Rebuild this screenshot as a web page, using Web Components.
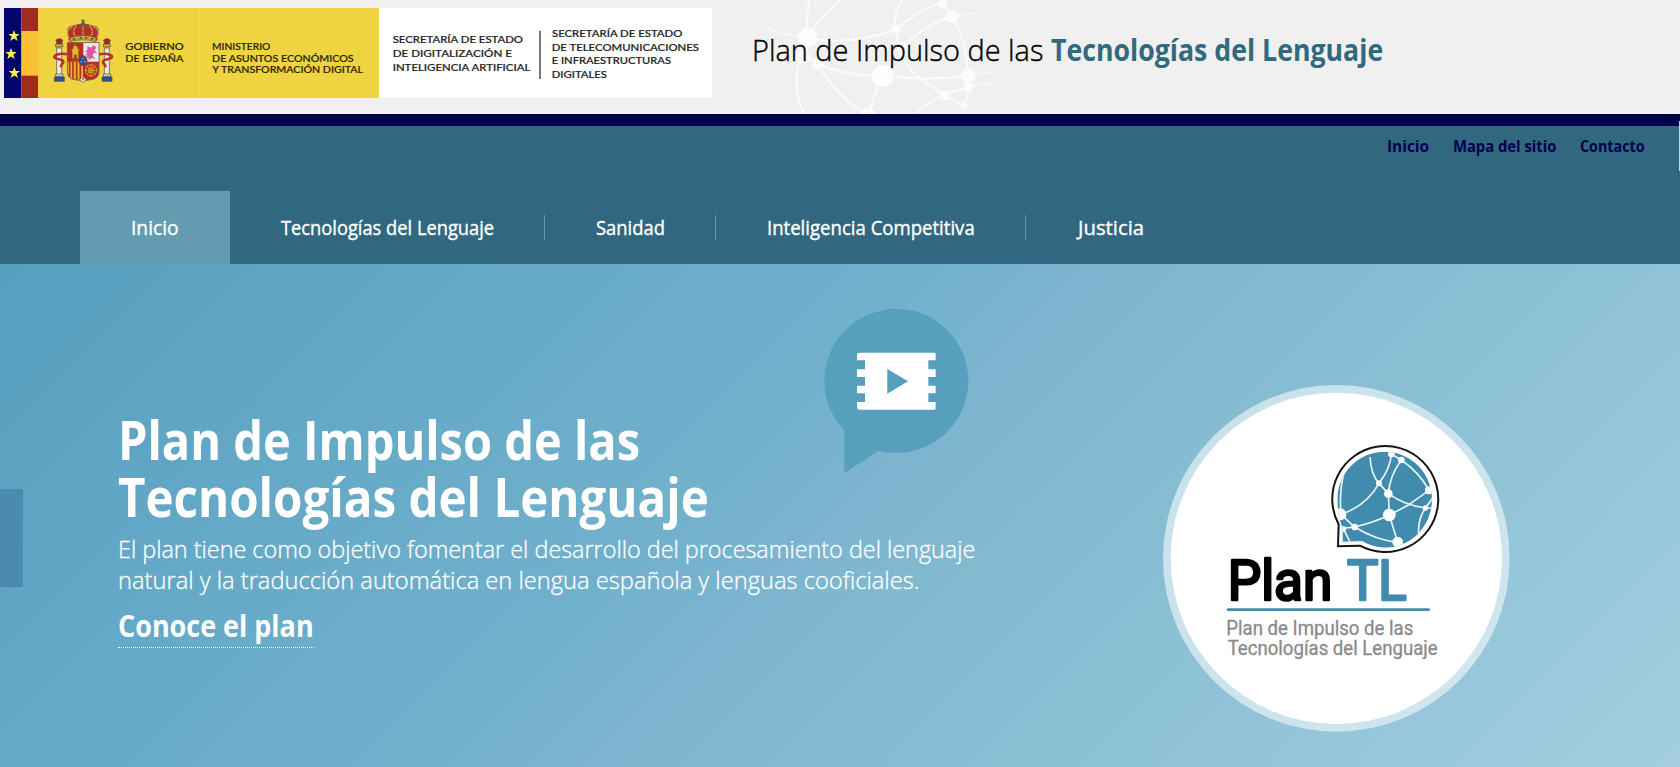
<!DOCTYPE html>
<html lang="es">
<head>
<meta charset="utf-8">
<title>Plan de Impulso de las Tecnologías del Lenguaje</title>
<style>
html,body{margin:0;height:100%;overflow:hidden}
body{font-family:"Open Sans","Noto Sans",sans-serif;background:#f0f0f0}
</style>
</head>
<body>
<plan-page></plan-page>
<script>
// Renders its text on one line at exactly the width given in the "w" attribute.
class FitText extends HTMLElement{
  connectedCallback(){
    if(this.shadowRoot)return;
    const r=this.attachShadow({mode:'open'});
    r.innerHTML='<style>:host{display:block;white-space:nowrap}span{display:inline-block;transform-origin:0 50%}</style><span><slot></slot></span>';
    const s=r.querySelector('span'),w=+this.getAttribute('w');
    this.style.width=w+'px';
    s.style.transform='scaleX('+w/s.offsetWidth+')';
  }
}

const define=(name,html)=>customElements.define(name,class extends HTMLElement{
  connectedCallback(){
    if(this.shadowRoot)return;
    this.attachShadow({mode:'open'}).innerHTML=html;
  }
});

define('gov-logo',`<style>:host{display:block;width:708px;height:90px}svg{display:block}text{font-family:Lato,sans-serif;font-weight:500;font-size:31px;stroke-width:.6}</style>
<svg width="708" height="90" viewBox="12 24 2124 270">
<rect x="12" y="24" width="2124" height="270" fill="#fff"/>
<rect x="115" y="24" width="1022" height="270" fill="#f0d340"/>
<rect x="12" y="24" width="52" height="270" fill="#00046b"/>
<rect x="64" y="24" width="51" height="270" fill="#a02b1f"/>
<rect x="64" y="93" width="51" height="134" fill="#fcc133"/>
<rect x="114" y="24" width="3" height="270" fill="#f3c83c"/>
<rect x="594" y="24" width="5" height="270" fill="#f4da4c"/>
<g fill="#fbee4a">
<path id="st" d="M42 90l4.500 12h12.500l-10 8 4 13-11-7.500-11 7.500 4-13-10-8h12.500z"/>
<use href="#st" x="-9" y="54"/><use href="#st" x="1" y="111"/></g>
<g stroke-linejoin="round">
<g stroke="#4d4938" stroke-width="2">
<path fill="#ececdf" d="M170 144h15v83h-15zM313 144h15v83h-15z"/>
<path fill="#a02b2b" d="M168 120q10-9 20 0l-3 12h-14zM311 120q10-9 20 0l-3 12h-14z"/>
<path fill="#d9a63a" d="M167 132h21v9h-21zM310 132h21v9h-21z"/>
<path fill="#ccd5dc" d="M167 222h22v8h-22zM310 222h22v8h-22z"/>
<path fill="#28549b" d="M163 231h30v13h-30zM306 231h30v13h-30z"/>
</g>
<path d="M204 163q-20-4-34 1-13 6-3 11l20 6q7 5-2 12l-3 9M295 163q20-4 34 1 13 6 3 11l-20 6q-7 5 2 12l3 9" fill="none" stroke="#bd3030" stroke-width="8"/>
<path d="M202 128h95v86q0 22-24 25-15 0-24 7-9-7-24-7-23-3-23-25z" fill="#bd2b24" stroke="#736647" stroke-width="3"/>
<path d="M250 129h46v56h-46z" fill="#eee9ec"/>
<path d="M203 185h46v59q-9-6-22-6-24-3-24-24z" fill="#e4b72e"/>
<path d="M209 185v45M219 185v52M230 185v53M241 185v55" stroke="#b92e20" stroke-width="5"/>
<path d="M216 176v-22l-2-8h5v-8h5v-5h4v5h5v8h5l-2 8v22h-7v-11h-6v11z" fill="#e1b631" stroke="#725819" stroke-width="2"/>
<path d="M262 139l11 4 7-8 10 8-7 7 8 10-10-2-3 9 9 10-12-3-9 7-1-9-9 5 6-12-7 2 7-10-8-3 8-4z" fill="#dc59a2"/>
<circle cx="273" cy="211" r="17" fill="none" stroke="#d39a28" stroke-width="3"/>
<path d="M273 193v37M255 211h37M260 198l26 26M286 198l-26 26" stroke="#d39a28" stroke-width="3"/>
<circle cx="273" cy="211" r="8" fill="none" stroke="#d39a28" stroke-width="3"/>
<path d="M240 239l9-9 9 9-9 7z" fill="#e8eee9"/><path d="M249 232v9" stroke="#398856" stroke-width="4"/>
<ellipse cx="249" cy="182" rx="12" ry="15" fill="#24509b" stroke="#a1372d" stroke-width="3"/>
<circle cx="249" cy="176" r="2" fill="#edca43"/><circle cx="244" cy="185" r="2" fill="#edca43"/><circle cx="254" cy="185" r="2" fill="#edca43"/>
<path d="M207 121l-4-24q-3-18 18-19 12-6 28-5 16-1 28 5 21 1 18 19l-4 24q-42-13-84 0z" fill="#b62e2a" stroke="#7d6331" stroke-width="3"/>
<path d="M207 115q-13-25 12-35M291 115q13-25-12-35M227 111q-13-18 3-34M271 111q13-18-3-34M249 72v39" fill="none" stroke="#d9bd66" stroke-width="4" stroke-dasharray="4 2"/>
<path d="M209 113q40-13 80 0l-2 12q-38-11-76 0z" fill="#cfa035" stroke="#715325" stroke-width="2"/>
<path d="M218 117h8M239 114h7M255 114h7M272 117h8" stroke="#285b94" stroke-width="4"/>
<circle cx="249" cy="71" r="5" fill="#456ca3" stroke="#584819" stroke-width="2"/>
<path d="M249 67v-8M244 62h10" stroke="#584819" stroke-width="3"/>
</g>
<g fill="#29240b" stroke="#29240b">
<text x="376" y="150" textLength="175" lengthAdjust="spacingAndGlyphs">GOBIERNO</text>
<text x="376" y="185" textLength="174" lengthAdjust="spacingAndGlyphs">DE ESPAÑA</text>
<text x="636" y="150" textLength="175" lengthAdjust="spacingAndGlyphs">MINISTERIO</text>
<text x="636" y="185" textLength="425" lengthAdjust="spacingAndGlyphs">DE ASUNTOS ECONÓMICOS</text>
<text x="637" y="220" textLength="452" lengthAdjust="spacingAndGlyphs">Y TRANSFORMACIÓN DIGITAL</text></g>
<g fill="#222" stroke="#222">
<text x="1178" y="130" textLength="391" lengthAdjust="spacingAndGlyphs">SECRETARÍA DE ESTADO</text>
<text x="1178" y="171" textLength="358" lengthAdjust="spacingAndGlyphs">DE DIGITALIZACIÓN E</text>
<text x="1178" y="212" textLength="413" lengthAdjust="spacingAndGlyphs">INTELIGENCIA ARTIFICIAL</text>
<text x="1656" y="111" textLength="391" lengthAdjust="spacingAndGlyphs">SECRETARÍA DE ESTADO</text>
<text x="1655" y="152" textLength="442" lengthAdjust="spacingAndGlyphs">DE TELECOMUNICACIONES</text>
<text x="1655" y="193" textLength="358" lengthAdjust="spacingAndGlyphs">E INFRAESTRUCTURAS</text>
<text x="1655" y="234" textLength="166" lengthAdjust="spacingAndGlyphs">DIGITALES</text></g>
<path d="M1620 92v145" stroke="#333" stroke-width="4"/>
</svg>`);

define('net-backdrop',`<style>:host{display:block}svg{display:block}</style>
<svg width="260" height="114" viewBox="750 0 260 114">
<g fill="none" stroke="#fbfbfb" stroke-width="2">
<path d="M807 38Q806 18 809 0M807 38Q820 17 841 0M807 38Q855 46 896 29M896 29Q892 14 902 0M896 29Q925 6 942 3M942 3L952 16M896 29Q899 64 921 79T944 95M952 16Q915 30 904 48M952 16Q968 45 968 75M818 64Q850 77 883 76Q925 81 968 76M818 64Q838 100 868 114M883 76Q873 92 870 114M801 56Q791 85 804 114M807 38V57L818 64M968 76V87Q968 99 964 106M944 95L964 106M944 95L968 87M944 95Q928 102 917 113"/>
<path stroke-width="1.200" d="M765 27Q782 35 807 38M952 16L978 13M968 76L997 71M968 87L995 82"/></g>
<g fill="#fcfcfc"><circle cx="807.500" cy="38" r="10"/><circle cx="803" cy="57" r="7"/><circle cx="818" cy="64" r="6"/><circle cx="883" cy="76" r="11"/><circle cx="968" cy="75.500" r="7"/><circle cx="968" cy="87" r="5"/><circle cx="944.500" cy="95.500" r="5"/><circle cx="964" cy="106" r="4" opacity=".7"/><circle cx="896" cy="29" r="4.500"/><circle cx="952" cy="16.500" r="6"/><circle cx="942.500" cy="3" r="5"/><circle cx="904" cy="49" r="7"/><circle cx="868" cy="116" r="8"/></g>
</svg>`);

define('site-header',`<style>
:host{display:flex;position:relative;height:114px;background:#f0f0f0;border-bottom:12px solid #00004c}
gov-logo{margin:8px 0 0 4px}
net-backdrop{position:absolute;left:750px;top:0}
h1{position:relative;display:flex;margin:0 0 0 40px;font-size:30px;line-height:99px;height:99px;font-weight:300;color:#000;gap:8px;-webkit-text-stroke:.4px}
b{font-weight:700;color:#31697f;-webkit-text-stroke:0}
</style><gov-logo></gov-logo><net-backdrop></net-backdrop>
<h1><fit-text w="291">Plan de Impulso de las</fit-text><b><fit-text w="332">Tecnologías del Lenguaje</fit-text></b></h1>`);

define('top-links',`<style>
:host{display:flex;justify-content:flex-end;gap:24px;height:65px;padding-right:35px;font-size:16.500px;line-height:40px;font-weight:700;color:#00004f}
</style><fit-text w="42">Inicio</fit-text><fit-text w="103">Mapa del sitio</fit-text><fit-text w="65">Contacto</fit-text>`);

define('nav-item',`<style>
:host{display:flex;align-items:center;justify-content:space-between;box-sizing:border-box;height:73px;padding-left:51px}
:host([active]){background:#639bb0}
:host([last]){padding-left:52px}
i{width:1px;height:25px;background:#5d97ad}
:host([active]) i,:host([last]) i{visibility:hidden}
</style><slot></slot><i></i>`);

define('main-nav',`<style>
:host{display:grid;grid-template-columns:150px 315px 171px 310px 170px;padding-left:80px;font-size:20px;line-height:71px;font-weight:400;color:#fff;-webkit-text-stroke:.35px}
</style>
<nav-item active><fit-text w="48">Inicio</fit-text></nav-item>
<nav-item><fit-text w="213">Tecnologías del Lenguaje</fit-text></nav-item>
<nav-item><fit-text w="69">Sanidad</fit-text></nav-item>
<nav-item><fit-text w="208">Inteligencia Competitiva</fit-text></nav-item>
<nav-item last><fit-text w="66">Justicia</fit-text></nav-item>`);

define('nav-band',`<style>
:host{display:block;position:relative;height:138px;background:#31687f}
i{position:absolute;right:0;top:-5px;width:1px;height:50px;background:#c6d5db}
</style><top-links></top-links><main-nav></main-nav><i></i>`);

define('video-bubble',`<style>:host{display:block}svg{display:block}</style>
<svg width="146" height="166" viewBox="72 52 438 498">
<path d="M136 420A216 216 0 1 1 239 480L136 547z" fill="#56a0be"/>
<path d="M181 186H406Q410 186 410 190V209H388V236H410V259H388V285H410V308H388V334H410V353Q410 357 406 357H181Q174 357 174 350V334H198V308H174V285H198V259H174V236H198V209H174V193Q174 186 181 186z" fill="#fff"/>
<path d="M265 235L327 272 265 309z" fill="#56a0be"/></svg>`);

define('plan-badge',`<style>:host{display:block}svg{display:block;overflow:visible}text{font-family:Roboto,sans-serif;stroke-linejoin:round}</style>
<svg width="346.670" height="346.670" viewBox="40 42 1040 1040">
<circle cx="560" cy="562" r="520" fill="#fff" fill-opacity=".55"/>
<circle cx="560" cy="562" r="497" fill="#fff"/>
<path d="M567 460A159 159 0 1 1 631 524L565 526z" fill="#fff" stroke="#151515" stroke-width="6"/>
<clipPath id="g"><path d="M579 470Q563 436 563 385A142 144 0 1 1 705 530Q668 528 637 510L579 512z"/></clipPath>
<g clip-path="url(#g)"><rect x="550" y="230" width="310" height="310" fill="#408bae"/>
<g fill="none" stroke="#e9f4f8" stroke-width="5">
<path d="M574 430Q567 350 588 290M574 430Q650 405 688 337Q722 292 725 250M661 258Q664 310 688 337L716 368M725 250L755 267Q720 315 716 368L719 432M755 267Q810 305 838 358M716 368Q765 403 827 411H850M719 432L775 403 838 358M719 432Q680 452 615 468L580 472M574 430L615 468Q680 508 744 514M719 432L744 514M827 411Q804 445 807 490M827 411L850 380M582 475L602 514"/></g>
<g fill="#fff"><circle cx="572" cy="430" r="18"/><circle cx="688" cy="337" r="9"/><circle cx="725" cy="249" r="10"/><circle cx="755" cy="267" r="10"/><circle cx="716" cy="368" r="13"/><circle cx="719" cy="432" r="19"/><circle cx="838" cy="358" r="12"/><circle cx="827" cy="411" r="8"/><circle cx="615" cy="468" r="10"/><circle cx="744" cy="513" r="16"/><circle cx="580" cy="474" r="9"/></g></g>
<text x="234" y="688" font-size="164" font-weight="400" stroke="#000" stroke-width="8" textLength="314" lengthAdjust="spacingAndGlyphs">Plan</text>
<text x="592" y="688" font-size="164" font-weight="400" fill="#408bae" stroke="#408bae" stroke-width="8" textLength="179" lengthAdjust="spacingAndGlyphs">TL</text>
<path d="M235 716H837" stroke="#408bae" stroke-width="8" stroke-linecap="round"/>
<g fill="#8b8b8b" stroke="#8b8b8b" stroke-width="1" font-size="58">
<text x="230" y="793" textLength="561" lengthAdjust="spacingAndGlyphs">Plan de Impulso de las</text>
<text x="234" y="852" textLength="630" lengthAdjust="spacingAndGlyphs">Tecnologías del Lenguaje</text></g>
</svg>`);

define('hero-banner',`<style>
:host{display:flex;position:relative;height:503px;color:#fff;background:linear-gradient(135deg,#569fbe 0%,#66aac8 25%,#72b1cc 43%,#7db4d0 50%,#80b9cf 56%,#90c3d7 77%,#a4cde1 100%)}
.prev{width:23px;height:98px;margin-top:225px;background:#4b8bb0}
.copy{width:860px;margin:147px 0 0 95px}
h2{margin:0;font-size:54px;line-height:57px;font-weight:700}
p{margin:8px 0 12px 0;font-size:24.300px;line-height:31px;font-weight:300;-webkit-text-stroke:.3px}
a{display:block;width:196px;font-size:30px;line-height:38px;font-weight:700;padding-bottom:2px;border-bottom:1px dotted #fff}
video-bubble{position:absolute;left:823px;top:43.500px}
plan-badge{margin:120.500px 0 0 185.300px}
</style>
<div class="prev"></div>
<div class="copy"><h2><fit-text w="522">Plan de Impulso de las</fit-text><fit-text w="591">Tecnologías del Lenguaje</fit-text></h2>
<p><fit-text w="857">El plan tiene como objetivo fomentar el desarrollo del procesamiento del lenguaje</fit-text><fit-text w="801">natural y la traducción automática en lengua española y lenguas cooficiales.</fit-text></p>
<a><fit-text w="196">Conoce el plan</fit-text></a></div>
<plan-badge></plan-badge><video-bubble></video-bubble>`);

define('plan-page',`<style>:host{display:block;width:1680px;height:767px;overflow:hidden}</style>
<site-header></site-header><nav-band></nav-band><hero-banner></hero-banner>`);
customElements.define('fit-text',FitText);
</script>
</body>
</html>
